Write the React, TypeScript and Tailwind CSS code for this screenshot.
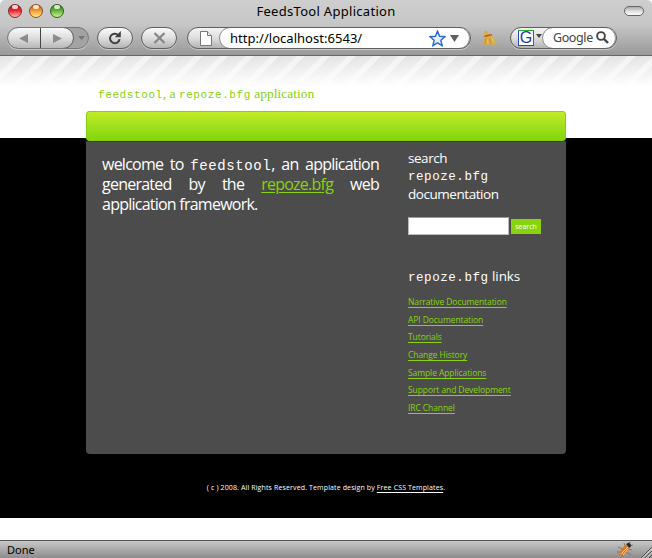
import React from "react";

const GRANDE = "font-['Noto_Sans','Open_Sans',sans-serif]";
const TREB = "font-['Open_Sans','Noto_Sans',sans-serif]";
const MONO = "font-['Liberation_Mono',monospace]";

const links = [
  "Narrative Documentation",
  "API Documentation",
  "Tutorials",
  "Change History",
  "Sample Applications",
  "Support and Development",
  "IRC Channel",
];

const pill =
  "h-[22px] rounded-full border border-[#5f5f5f] bg-linear-to-b from-[#fafafa] via-[#dedede] to-[#b4b4b4] shadow-[0_1px_0_#c9c9c9] flex items-center justify-center shrink-0";

function Light({ tone }: { tone: string }) {
  return (
    <span className={`relative block size-[14px] rounded-full border ${tone}`}>
      <span className="absolute left-[3px] top-0 h-[4px] w-[6px] rounded-full bg-white/80" />
    </span>
  );
}

function TitleBar() {
  return (
    <div className="flex h-[27px] items-start pl-[8px] pr-[8px]">
      <div className="flex w-[130px] gap-[7px] pt-[4px]">
        <Light tone="border-[#7c2a2a] bg-linear-to-b from-[#a81818] via-[#ee2a35] to-[#ffb0b0]" />
        <Light tone="border-[#85502a] bg-linear-to-b from-[#b8591c] via-[#f59d35] to-[#ffee80]" />
        <Light tone="border-[#2f5a20] bg-linear-to-b from-[#2b7a1a] via-[#66b83c] to-[#c8f590]" />
      </div>
      <div className={`flex-1 pt-[2px] text-center text-[13px] leading-[18px] text-black ${GRANDE}`}>
        <span className="tracking-[0.3px]">FeedsTool Application</span>
      </div>
      <div className="flex w-[130px] justify-end pt-[6px]">
        <span className="h-[10px] w-[20px] rounded-full border border-[#666] bg-linear-to-b from-[#aaa] via-[#ddd] to-white" />
      </div>
    </div>
  );
}

function Toolbar() {
  return (
    <div className="flex h-[28px] items-start pl-[7px]">
      <div className="flex h-[22px] w-[82px] overflow-hidden rounded-full border border-[#777] bg-[#a3a3a3] shadow-[0_1px_0_#c9c9c9]">
        <div className="-ml-px -mt-px flex h-[22px] w-[67px] shrink-0 overflow-hidden rounded-full border border-[#5f5f5f] bg-linear-to-b from-[#fafafa] via-[#dedede] to-[#b8b8b8]">
          <div className="flex w-[33px] items-center justify-center border-r border-[#444]">
            <svg width="10" height="9"><path d="M0 4.5L9 0v9z" fill="#8c8c8c" /></svg>
          </div>
          <div className="flex flex-1 items-center justify-center">
            <svg width="10" height="9"><path d="M10 4.5L1 0v9z" fill="#8c8c8c" /></svg>
          </div>
        </div>
        <div className="flex flex-1 items-center justify-center">
          <svg width="7" height="4"><path d="M0 0h7L3.500 4z" fill="#777" /></svg>
        </div>
      </div>
      <div className={`${pill} ml-[8px] w-[36px]`}>
        <svg width="14" height="14" viewBox="0 0 14 14" fill="none">
          <path d="M10.300 4.100A4.800 4.800 0 1 0 11.600 8.200" stroke="#404040" strokeWidth="2" />
          <path d="M12.800 0v6.200H6.800z" fill="#404040" />
        </svg>
      </div>
      <div className={`${pill} ml-[8px] w-[36px]`}>
        <svg width="13" height="12" viewBox="0 0 13 12"><path d="M1.500 1l10 10M11.500 1l-10 10" stroke="#858585" strokeWidth="2.200" /></svg>
      </div>
      <div className="ml-[10px] flex h-[22px] w-[284px] overflow-hidden rounded-full border border-[#5f5f5f] bg-linear-to-b from-[#f4f4f4] via-[#dedede] to-[#b4b4b4] shadow-[0_1px_0_#c9c9c9]">
        <div className="flex w-[31px] shrink-0 items-center pl-[12px]">
          <svg width="12" height="15" viewBox="0 0 12 15"><path d="M.5.5h7l4 4v10H.5z" fill="#fff" stroke="#777" /><path d="M7.500.5v4h4" fill="#eee" stroke="#777" /></svg>
        </div>
        <div className="-mt-px flex h-[22px] flex-1 items-center rounded-full border border-[#8a8a8a] bg-white pl-[10px] pr-[10px]">
          <span className={`flex-1 text-[13px] leading-[18px] tracking-[0.030px] text-black ${GRANDE}`}>http://localhost:6543/</span>
          <svg width="17" height="17" viewBox="0 0 17 17">
            <path d="M8.500 1.200l2.100 5 5.300.5-4 3.600 1.200 5.300-4.600-2.800-4.600 2.800 1.200-5.300-4-3.600 5.300-.5z" fill="#e4f0ff" stroke="#2d6ad3" strokeWidth="1.500" />
          </svg>
          <svg className="ml-[4px]" width="9" height="7"><path d="M0 0h9L4.500 7z" fill="#606060" /></svg>
        </div>
      </div>
      <svg className="ml-[11px] mt-[3px]" width="16" height="16" viewBox="0 0 16 16">
        <path d="M2 1.500L4.500.5 7 4l2.500.5 1.500 3L15 13l-2 1.500H8L5 14.500H.500L2.500 8.500V5z" fill="#dcab42" />
        <path d="M2.500 6.300L9.800 4.700" stroke="#b5482c" strokeWidth="1.200" />
        <path d="M4 8.500L3 14M7.500 8l1.500 6" stroke="#b98a2c" strokeWidth=".8" />
        <path d="M5.700 8.500v5M9.500 7.500l2.800 5" stroke="#f0cb66" strokeWidth=".8" />
      </svg>
      <div className="ml-[12px] flex h-[22px] w-[107px] overflow-hidden rounded-full border border-[#5f5f5f] bg-linear-to-b from-[#f4f4f4] via-[#dedede] to-[#b4b4b4] shadow-[0_1px_0_#c9c9c9]">
        <div className="flex w-[31px] shrink-0 items-center pl-[7px]">
          <span className="flex size-[16px] shrink-0 items-center justify-center border border-b-[#2848b8] border-l-[#2848b8] border-r-[#d22] border-t-[#2a2] bg-white font-['Liberation_Sans',sans-serif] text-[16px] leading-none text-[#1a3aa8]">G</span>
          <svg className="-mt-[4px] ml-[2px] shrink-0" width="6" height="4"><path d="M0 0h6L3 4z" fill="#444" /></svg>
        </div>
        <div className="-mt-px flex h-[22px] flex-1 items-center rounded-full border border-[#8a8a8a] bg-white pl-[10px]">
          <span className={`w-[43px] text-[12.500px] leading-[18px] tracking-[-0.400px] text-[#444] ${GRANDE}`}>Google</span>
          <svg className="-mt-[2px] shrink-0" width="13" height="13" viewBox="0 0 13 13"><circle cx="5" cy="5" r="3.900" fill="none" stroke="#444" strokeWidth="1.900" /><path d="M8 8l4 4" stroke="#444" strokeWidth="2.400" /></svg>
        </div>
      </div>
    </div>
  );
}

function Main() {
  return (
    <div className="mx-auto w-[480px]">
      <div className="flex h-[55px] items-end pb-[9px] pl-[12px]">
        <h1 className="whitespace-pre font-['Liberation_Serif',serif] text-[13.500px] leading-[16px] text-[#86d30e]">
          <span className={`${MONO} text-[11px] leading-none tracking-[0.600px]`}>feedstool</span>, a <span className={`${MONO} text-[11px] leading-none tracking-[0.600px]`}>repoze.bfg</span> application
        </h1>
      </div>
      <div className="h-[30px] rounded-[3px] border border-[#86cf10] bg-linear-to-b from-[#bfec27] to-[#82d60c]" />
      <div className="flex h-[313px] rounded-b-[4px] border-t border-[#3c3c3c] bg-[#4c4c4c] text-white">
        <div className={`w-[322px] pl-[16px] pt-[12px] text-[16px] leading-[20px] tracking-[-0.760px] ${TREB}`}>
          <p className="flex h-[20px] w-[277px] justify-between">
            <span>welcome</span><span>to</span><span><span className={`${MONO} text-[14px] leading-none tracking-[0.600px]`}>feedstool</span>,</span><span>an</span><span>application</span>
          </p>
          <p className="flex h-[20px] w-[277px] justify-between">
            <span>generated</span><span>by</span><span>the</span><a className="text-[#86d30e] underline underline-offset-2">repoze.bfg</a><span>web</span>
          </p>
          <p className="h-[20px]">application framework.</p>
        </div>
        <div className={`flex-1 pt-[7px] ${TREB}`}>
          <h2 className="flex flex-col text-[13.500px] leading-[18px] tracking-[-0.450px]">
            <span className="h-[18px]">search</span>
            <span className={`h-[18px] pt-px text-[12.500px] tracking-[0.560px] ${MONO}`}>repoze.bfg</span>
            <span className="h-[18px]">documentation</span>
          </h2>
          <div className="mt-[14px] flex h-[18px] items-start gap-[2px]">
            <span className="h-[18px] w-[101px] border border-[#b9bdb9] border-t-[#999] bg-white" />
            <button className="mt-[2px] h-[15px] w-[30px] bg-[#86d30e] text-[7px] leading-[15px] text-white">search</button>
          </div>
          <h2 className="mt-[32px] h-[18px] text-[13.500px] leading-[18px] tracking-[-0.100px]"><span className={`${MONO} text-[12.500px] leading-none tracking-[0.560px]`}>repoze.bfg</span> links</h2>
          <ul className="mt-[8px]">
            {links.map((t) => (
              <li key={t} className="h-[17.660px] text-[8.500px] leading-[17px] tracking-[-0.090px] text-[#86d30e]"><a className="underline underline-offset-[1.500px]">{t}</a></li>
            ))}
          </ul>
        </div>
      </div>
    </div>
  );
}

export default function App() {
  return (
    <div className="flex h-[558px] w-[652px] flex-col overflow-hidden bg-white">
      <header className="flex h-[56px] flex-col rounded-t-[5px] border-b border-[#666] bg-linear-to-b from-[#cecece] via-[#c6c6c6] via-45% to-[#999]">
        <TitleBar />
        <Toolbar />
      </header>
      <main className="h-[462px] bg-[linear-gradient(to_bottom,transparent,white_31px,white_82px,black_82px),repeating-linear-gradient(135deg,#e3e3e3_0px,#e6e6e6_11px,#f2f2f2_12.5px,#f2f2f2_17px,#e3e3e3_18px)]">
        <Main />
        <p className={`mt-[28px] text-center text-[7px] leading-[12px] tracking-[0.130px] text-white ${TREB}`}>( c ) 2008. All Rights Reserved. Template design by <a className="underline underline-offset-[1.500px]">Free CSS Templates</a>.</p>
      </main>
      <div className="h-[22px]" />
      <footer className={`flex h-[18px] items-center justify-between border-t border-[#555] bg-linear-to-b from-[#c8c8c8] to-[#8d8d8d] pl-[7px] text-[11px] text-black ${GRANDE}`}>
        <span className="pt-px">Done</span>
        <div className="flex items-end">
          <svg className="mr-[7px]" width="16" height="16" viewBox="0 0 16 16">
            <path d="M1 5l5 2M0 10l5 0M5 15l2-4M14 13l-5-3M15 8l-5-1M7 1l2 5M12 1l2-1M12 4l4-1" stroke="#776a5c" strokeWidth=".8" />
            <path d="M2.500 13.500C2 10 6 4 9.500 3l3 2.500C12 9 7 14.500 2.500 13.500z" fill="#e07820" />
            <path d="M4 12l7-7M6 13l5-6" stroke="#ffc992" strokeWidth="1" />
            <path d="M9 2l3-1.500 2.500 3-2 2.500z" fill="#282828" />
          </svg>
          <svg width="12" height="12" viewBox="0 0 12 12"><path d="M1 12L12 1M5 12l7-7M9 12l3-3" stroke="#555" /><path d="M2.500 12L12 2.500M6.500 12L12 6.500" stroke="#ddd" /></svg>
        </div>
      </footer>
    </div>
  );
}
